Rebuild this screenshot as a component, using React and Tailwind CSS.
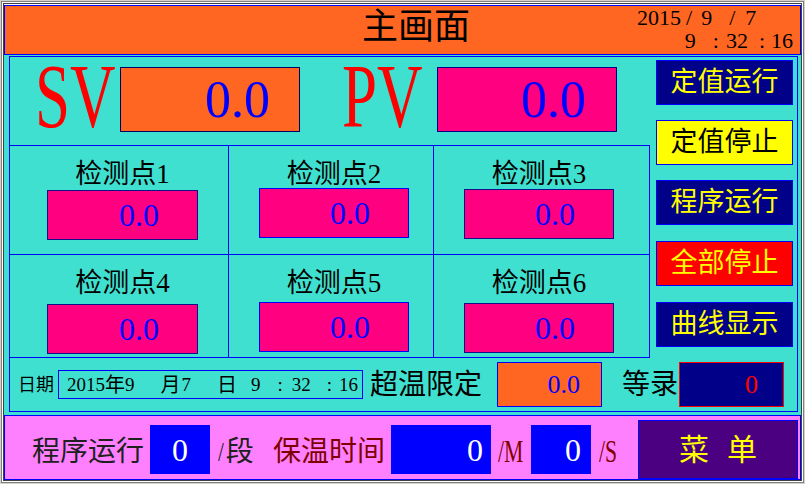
const SERIF = "font-['Liberation_Serif','Noto_Sans_CJK_SC',serif]";

const cells = [
  { label: '检测点1', pl: 'pl-[37px]', w: 'w-[151px]', mt: 'mt-[2px]', bd: 'border-[#10108a]', cell: 'border-r border-b' },
  { label: '检测点2', pl: 'pl-[30px]', w: 'w-[150px]', mt: 'mt-[0px]', bd: 'border-[#0000ff]', cell: 'border-r border-b' },
  { label: '检测点3', pl: 'pl-[30px]', w: 'w-[150px]', mt: 'mt-[1px]', bd: 'border-[#10108a]', cell: 'border-b' },
  { label: '检测点4', pl: 'pl-[37px]', w: 'w-[151px]', mt: 'mt-[7px]', bd: 'border-[#10108a]', cell: 'border-r' },
  { label: '检测点5', pl: 'pl-[30px]', w: 'w-[150px]', mt: 'mt-[5px]', bd: 'border-[#0000ff]', cell: 'border-r' },
  { label: '检测点6', pl: 'pl-[30px]', w: 'w-[150px]', mt: 'mt-[6px]', bd: 'border-[#10108a]', cell: '' },
];

const buttons = [
  { t: '定值运行', cls: 'mt-[3px] bg-[#000088] text-[#ffff00]' },
  { t: '定值停止', cls: 'mt-[15px] bg-[#ffff00] text-[#000000]' },
  { t: '程序运行', cls: 'mt-[15px] bg-[#000088] text-[#ffff00]' },
  { t: '全部停止', cls: 'mt-[16px] bg-[#ff0000] text-[#ffff00]' },
  { t: '曲线显示', cls: 'mt-[16px] bg-[#000088] text-[#ffff00]' },
];

export default function App() {
  return (
    <div className={`w-[805px] h-[484px] border border-[#d4d0c8] bg-white ${SERIF}`}>
      <div className="h-full border border-[#808080]">
        <div className="h-full border border-white">
          <div className="h-full border border-[#404040] flex flex-col">
            {/* Header */}
            <div className="mt-px h-[50px] shrink-0 bg-[#ff6621] border border-[#0000ff] flex items-start text-black">
              <div className="pl-[357px] pt-[1px] text-[36px] leading-[40px] whitespace-nowrap">主画面</div>
              <div className="ml-auto mr-[7px] w-[156px] flex flex-col pt-px gap-px text-[22px] leading-[22px]">
                <div className="flex">
                  <span>2015</span>
                  <span className="ml-[5px]">/</span>
                  <span className="ml-[9px]">9</span>
                  <span className="ml-[17px]">/</span>
                  <span className="ml-[10px]">7</span>
                </div>
                <div className="flex justify-end">
                  <span>9</span>
                  <span className="ml-[17px]">:</span>
                  <span className="ml-[7px]">32</span>
                  <span className="ml-[11px]">:</span>
                  <span className="ml-[6px]">16</span>
                </div>
              </div>
            </div>

            {/* Middle */}
            <div className="h-[360px] shrink-0 bg-[#40e0d0] pl-[5px] pr-[3px] pt-px pb-[3px]">
              <div className="h-full border border-[#0000ff] flex flex-col">
                <div className="h-[301px] flex">
                  <div className="w-[640px] flex flex-col">
                    {/* SV / PV row */}
                    <div className="h-[88px] flex items-start">
                      <div className="w-[110px] pl-[25px] text-[90px] leading-[80px] text-[#ff0000] whitespace-nowrap">
                        <span className="inline-block origin-left scale-x-[0.7]">SV</span>
                      </div>
                      <div className="mt-[10px] w-[180px] h-[65px] bg-[#ff6621] border border-[#000060] flex items-center justify-end pr-[29px] text-[52px] leading-none text-[#0000ff]">
                        0.0
                      </div>
                      <div className="w-[137px] pl-[42px] text-[90px] leading-[80px] text-[#ff0000] whitespace-nowrap">
                        <span className="inline-block origin-left scale-x-[0.7]">PV</span>
                      </div>
                      <div className="mt-[10px] w-[180px] h-[65px] bg-[#ff0080] border border-[#000080] flex items-center justify-end pr-[30px] text-[52px] leading-none text-[#0000ff]">
                        0.0
                      </div>
                    </div>
                    {/* Grid */}
                    <div className="h-[213px] border-t border-r border-b border-[#0000ff] grid grid-cols-[219px_205px_215px] grid-rows-[109px_102px]">
                      {cells.map((c) => (
                        <div key={c.label} className={`${c.cell} border-[#0000ff] ${c.pl} pt-[15px]`}>
                          <div className={`${c.w} flex flex-col`}>
                            <div className="text-center text-[27px] leading-[27px] text-black whitespace-nowrap">{c.label}</div>
                            <div className={`${c.mt} h-[50px] bg-[#ff0080] border ${c.bd} flex items-center justify-end pr-[38px] text-[32px] leading-none text-[#0000ff]`}>
                              0.0
                            </div>
                          </div>
                        </div>
                      ))}
                    </div>
                  </div>
                  {/* Buttons */}
                  <div className="ml-[6px] flex flex-col">
                    {buttons.map((b) => (
                      <div key={b.t} className={`${b.cls} w-[137px] h-[45px] border border-[#0000ff] flex items-center justify-center text-[27px] leading-none whitespace-nowrap`}>
                        {b.t}
                      </div>
                    ))}
                  </div>
                </div>
                {/* Bottom row */}
                <div className="h-[53px] flex items-center text-black">
                  <div className="w-[48px] pl-[8px] text-[18px] leading-none whitespace-nowrap">日期</div>
                  <div className="w-[305px] h-[29px] border border-[#0000ff] flex items-center text-[19px] leading-none whitespace-nowrap">
                    <span className="ml-[8px]">2015</span>
                    <span className="text-[20px]">年</span>
                    <span>9</span>
                    <span className="ml-[26px] text-[20px]">月</span>
                    <span className="ml-[1px]">7</span>
                    <span className="ml-[26px] text-[20px]">日</span>
                    <span className="ml-[14px]">9</span>
                    <span className="ml-[17px]">:</span>
                    <span className="ml-[9px]">32</span>
                    <span className="ml-[16px]">:</span>
                    <span className="ml-[7px]">16</span>
                  </div>
                  <div className="w-[134px] pl-[7px] text-[28px] leading-none whitespace-nowrap">超温限定</div>
                  <div className="w-[105px] h-[45px] bg-[#ff6621] border border-[#0000ff] flex items-center justify-end pr-[21px] text-[26px] leading-none text-[#0000ff]">
                    0.0
                  </div>
                  <div className="w-[77px] pl-[20px] text-[28px] leading-none whitespace-nowrap">等录</div>
                  <div className="w-[105px] h-[45px] bg-[#000088] border border-[#ff0000] flex items-center justify-end pr-[25px] text-[26px] leading-none text-[#ff0000]">
                    0
                  </div>
                </div>
              </div>
            </div>

            {/* Bottom bar */}
            <div className="h-[65px] shrink-0 bg-[#ff80ff] border border-[#0000ff] flex items-start">
              <div className="w-[145px] pl-[27px] mt-[22px] text-[28px] leading-[28px] text-[#202020] whitespace-nowrap">程序运行</div>
              <div className="mt-[9px] w-[60px] h-[49px] bg-[#0000ff] flex items-center justify-center text-[32px] leading-none text-white">0</div>
              <div className="w-[63px] pl-[8px] mt-[22px] text-[28px] leading-[28px] text-[#202020] whitespace-nowrap">
                <span className="inline-block origin-left scale-x-[0.75]">/</span>段
              </div>
              <div className="w-[118px] mt-[22px] text-[28px] leading-[28px] text-[#800000] whitespace-nowrap">保温时间</div>
              <div className="mt-[9px] w-[100px] h-[49px] bg-[#0000ff] flex items-center justify-end pr-[8px] text-[32px] leading-none text-white">0</div>
              <div className="w-[40px] pl-[7px] mt-[22px] text-[31px] leading-[28px] text-[#800000] whitespace-nowrap">
                <span className="inline-block origin-left scale-x-[0.7]">/M</span>
              </div>
              <div className="mt-[9px] w-[60px] h-[49px] bg-[#0000ff] flex items-center justify-end pr-[10px] text-[32px] leading-none text-white">0</div>
              <div className="w-[47px] pl-[8px] mt-[22px] text-[31px] leading-[28px] text-[#800000] whitespace-nowrap">
                <span className="inline-block origin-left scale-x-[0.7]">/S</span>
              </div>
              <div className="mt-[4px] w-[160px] h-[59px] bg-[#4b0082] border border-[#0000ff] flex items-center justify-center text-[30px] leading-none text-[#ffff00] whitespace-nowrap">
                <span>菜</span>
                <span className="ml-[18px]">单</span>
              </div>
            </div>
          </div>
        </div>
      </div>
    </div>
  );
}
